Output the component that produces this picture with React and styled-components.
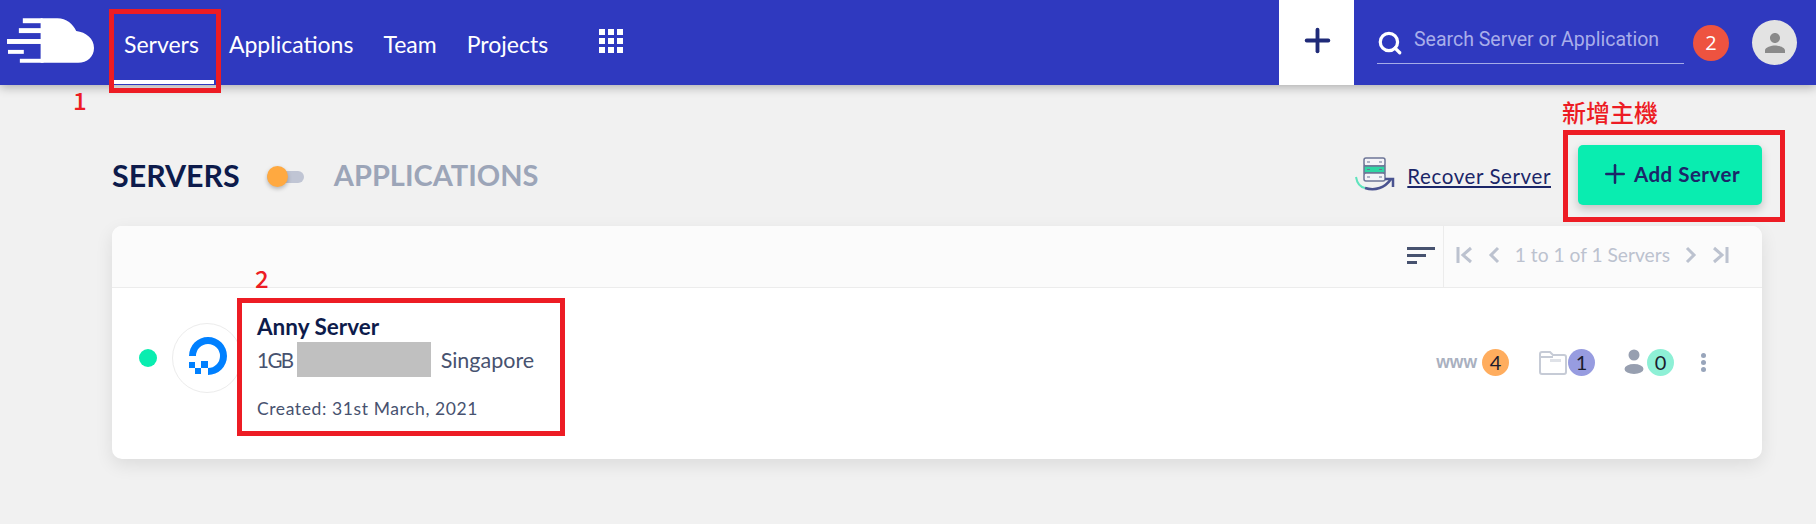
import React from 'react';
import styled, { createGlobalStyle } from 'styled-components';
import { Search, Plus } from 'lucide-react';

const GlobalStyle = createGlobalStyle`
  html, body {
    margin: 0;
    padding: 0;
    background: #f1f1f1;
    font-family: "Lato", "Liberation Sans", sans-serif;
  }
`;

const Page = styled.div`
  position: relative;
  width: 1816px;
  height: 524px;
  overflow: hidden;
`;

const Navbar = styled.header`
  display: flex;
  align-items: center;
  height: 85px;
  background: #2f39bf;
  box-shadow: 0 2px 10px rgba(0, 0, 0, 0.3);
`;

const LogoWrap = styled.div`
  display: flex;
  width: 124px;
  margin-top: -4px;
  padding-left: 7px;
  box-sizing: border-box;
`;

const NavLinks = styled.nav`
  display: flex;
  align-self: stretch;
  gap: 30px;
`;

const NavLink = styled.a`
  display: flex;
  align-items: center;
  height: 85px;
  padding-top: 2px;
  box-sizing: border-box;
  color: #fff;
  font-size: 23px;
  position: relative;

  ${(p) => p.$active && `
    &::after {
      content: "";
      position: absolute;
      left: -11px;
      right: -15px;
      bottom: 1px;
      height: 4px;
      background: #fff;
    }
  `}
`;

const AppsGrid = styled.div`
  display: grid;
  grid-template-columns: repeat(3, 6px);
  grid-auto-rows: 6px;
  gap: 3px;
  margin-left: 51px;
  margin-top: -4px;

  span {
    background: #fff;
  }
`;

const Spacer = styled.div`
  flex: 1;
`;

const PlusBox = styled.div`
  display: flex;
  align-items: center;
  justify-content: center;
  width: 75px;
  height: 85px;
  padding-left: 1px;
  padding-bottom: 4px;
  box-sizing: border-box;
  background: #fff;
  color: #1f2a78;
`;

const SearchBox = styled.div`
  display: flex;
  align-items: center;
  gap: 11px;
  align-self: flex-start;
  width: 307px;
  height: 64px;
  margin-left: 23px;
  padding-top: 15px;
  box-sizing: border-box;
  border-bottom: 1px solid #a5abe8;
  color: #fff;

  svg {
    margin-top: 8px;
  }
`;

const SearchText = styled.span`
  font-family: Roboto, sans-serif;
  font-size: 19.5px;
  color: #a9aeea;
`;

const NotifBadge = styled.div`
  display: flex;
  align-items: center;
  justify-content: center;
  width: 36px;
  height: 36px;
  margin-left: 9px;
  border-radius: 50%;
  background: #ee5340;
  color: #fff;
  font-family: "Open Sans", sans-serif;
  font-size: 20px;
`;

const Avatar = styled.div`
  display: flex;
  align-items: center;
  justify-content: center;
  width: 45px;
  height: 45px;
  margin: 0 19px 0 23px;
  border-radius: 50%;
  background: #e3e3e3;
`;

const Main = styled.main`
  padding: 0 54px 0 112px;
`;

const TitleRow = styled.div`
  display: flex;
  align-items: center;
  height: 141px;
  padding-top: 38px;
  box-sizing: border-box;
`;

const Heading = styled.h2`
  margin: 0;
  font-size: ${(p) => (p.$muted ? 29 : 30.4)}px;
  font-weight: 700;
  color: ${(p) => (p.$muted ? '#9ca5b8' : '#0d1b4b')};
`;

const Toggle = styled.div`
  position: relative;
  width: 37px;
  height: 12px;
  margin: 4px 30px 0 27px;
  border-radius: 6px;
  background: #c0c5d4;
`;

const Knob = styled.div`
  position: absolute;
  left: 0;
  top: -5px;
  width: 21px;
  height: 21px;
  border-radius: 50%;
  background: #ffa940;
  box-shadow: 0 2px 4px rgba(0, 0, 0, 0.25);
`;

const RecoverLink = styled.a`
  margin: 3px 27px 0 12px;
  color: #1b2668;
  font-size: 20.5px;
  letter-spacing: 0.6px;
  text-decoration: underline;
`;

const AddButton = styled.button`
  display: flex;
  align-items: center;
  justify-content: center;
  gap: 4px;
  width: 184px;
  height: 60px;
  padding: 0 0 2px;
  border: 0;
  border-radius: 5px;
  background: #09edb0;
  color: #1b2668;
  font-family: inherit;
  font-size: 20.5px;
  font-weight: 700;
  letter-spacing: 0.5px;
  box-shadow: 0 4px 10px rgba(0, 0, 0, 0.2);
`;

const Card = styled.section`
  border-radius: 10px;
  background: #fff;
  box-shadow: 0 6px 18px rgba(0, 0, 0, 0.09);
`;

const CardHeader = styled.div`
  display: flex;
  align-items: center;
  justify-content: flex-end;
  height: 61px;
  padding-right: 33px;
  border-radius: 10px 10px 0 0;
  border-bottom: 1px solid #ececec;
  background: #fbfbfb;
`;

const SortIcon = styled.svg`
  width: 28px;
  height: 18px;
  margin: 0 8px 2px 0;
`;

const Pager = styled.div`
  display: flex;
  align-items: center;
  gap: 15px;
  height: 100%;
  padding: 0 0 4px 12px;
  box-sizing: border-box;
  border-left: 1px solid #ececec;
  color: #bcc2cf;
  font-size: 19.2px;
`;

const PagerIcon = styled.svg`
  width: ${(p) => p.$w}px;
  height: 18px;
`;

const ServerRow = styled.div`
  display: flex;
  align-items: flex-start;
  height: 171px;
  padding: 35px 56px 0 27px;
  box-sizing: border-box;
`;

const StatusDot = styled.div`
  width: 18px;
  height: 18px;
  margin: 26px 15px 0 0;
  border-radius: 50%;
  background: #09edb0;
`;

const ProviderLogo = styled.div`
  display: flex;
  align-items: center;
  justify-content: center;
  width: 68px;
  height: 68px;
  border: 1px solid #ececec;
  border-radius: 50%;
`;

const ServerInfo = styled.div`
  flex: 1;
  margin-left: 15px;
`;

const ServerName = styled.div`
  margin-top: -9px;
  color: #0d1b4b;
  font-size: 22.5px;
  font-weight: 700;
  line-height: 26px;
`;

const ServerMeta = styled.div`
  display: flex;
  align-items: center;
  margin-top: 2px;
  color: #47526f;
  font-size: 21.5px;
`;

const MemorySize = styled.span`
  font-size: 20.5px;
  letter-spacing: -1.5px;
`;

const Redacted = styled.span`
  width: 134px;
  height: 35px;
  margin: 0 10px 0 4px;
  background: #c0c0c0;
`;

const Created = styled.div`
  margin-top: 21px;
  color: #47526f;
  font-size: 17.5px;
  letter-spacing: 0.6px;
`;

const Stats = styled.div`
  display: flex;
  align-items: center;
  height: 28px;
  margin-top: 25px;
`;

const StatGroup = styled.div`
  display: flex;
  align-items: center;
  gap: ${(p) => p.$gap || 2}px;
  margin-right: ${(p) => p.$mr || 30}px;
`;

const WwwLabel = styled.span`
  color: #a9b0bf;
  font-family: "Liberation Sans", sans-serif;
  font-size: 17.5px;
  font-weight: 700;
`;

const CountBadge = styled.span`
  display: flex;
  align-items: center;
  justify-content: center;
  width: 27px;
  height: 27px;
  border-radius: 50%;
  background: ${(p) => p.$bg};
  color: #1c1c2e;
  font-size: 20px;
`;

const Kebab = styled.div`
  display: flex;
  flex-direction: column;
  gap: 2px;
  margin-left: 1px;

  span {
    width: 5px;
    height: 5px;
    border-radius: 50%;
    background: #98a5bb;
  }
`;

// the red markup someone drew on top of the screenshot
const Mark = styled.div`
  position: absolute;
  left: ${(p) => p.$x}px;
  top: ${(p) => p.$y}px;
  width: ${(p) => p.$w}px;
  height: ${(p) => p.$h}px;
  box-sizing: border-box;
  border: 5px solid #ed1c24;
`;

const MarkText = styled.div`
  position: absolute;
  left: ${(p) => p.$x}px;
  top: ${(p) => p.$y}px;
  color: #ed1c24;
  font-family: "Noto Sans CJK TC", "Noto Sans", sans-serif;
  font-size: ${(p) => p.$size}px;
  font-weight: 500;
  line-height: 1;
`;

const CloudLogo = () => (
  <svg width="87" height="46" viewBox="0 0 88 46" fill="#fff">
    <path d="M34 0h17c9 0 16 6 19 13 10 1 18 8 18 17 0 9-7 15-16 15H34z" />
    <rect x="16" y="0" width="20" height="5" />
    <rect x="12" y="10" width="24" height="5" />
    <rect x="0" y="21" width="36" height="5" />
    <rect x="1" y="32" width="16" height="4" />
    <rect x="13" y="41" width="24" height="4" />
  </svg>
);

const OceanLogo = () => (
  <svg width="46" height="46" viewBox="0 0 46 46" fill="#0080ff">
    <path d="M24 40v-7a12 12 0 1 0-12-12H5a19 19 0 1 1 19 19z" />
    <rect x="17" y="26" width="7" height="7" />
    <rect x="11" y="33" width="6" height="6" />
    <rect x="5" y="27" width="6" height="6" />
  </svg>
);

const RecoverIcon = () => (
  <svg width="40" height="35" viewBox="0 0 40 35">
    <rect x="9" y="1" width="21" height="8" rx="2" fill="#f4f4f8" stroke="#6d7596" strokeWidth="1.5" />
    <rect x="9" y="9" width="21" height="7" fill="#2fd6a4" stroke="#6d7596" strokeWidth="1.5" />
    <rect x="9" y="16" width="21" height="8" rx="2" fill="#f4f4f8" stroke="#6d7596" strokeWidth="1.5" />
    <path d="M12 5h3M12 12.5h3M12 20h3M24 5h3M24 12.5h3M24 20h3" stroke="#6d7596" strokeWidth="1" />
    <path d="M1 20c1 6 4 10 9 11" fill="none" stroke="#5fe3bd" strokeWidth="2" />
    <path d="M10 31c10 3 20 0 26-9" fill="none" stroke="#4a5390" strokeWidth="2.5" />
    <path d="M30 22h8v8" fill="none" stroke="#4a5390" strokeWidth="2.5" />
  </svg>
);

const FolderIcon = () => (
  <svg width="28" height="26" viewBox="0 0 28 26" fill="none" stroke="#c6cbd6" strokeWidth="2">
    <path d="M1 5a2 2 0 0 1 2-2h8l3 3h11a2 2 0 0 1 2 2v15a2 2 0 0 1-2 2H3a2 2 0 0 1-2-2z" />
    <path d="M1 8h13" />
    <path d="M11 10h11v3H11z" fill="#dfe2e8" stroke="none" />
  </svg>
);

const PersonIcon = () => (
  <svg width="20" height="26" viewBox="0 0 20 26" fill="#979fb0">
    <circle cx="10" cy="6" r="5.5" />
    <ellipse cx="10" cy="20" rx="9.5" ry="5" />
  </svg>
);

const AvatarIcon = () => (
  <svg width="30" height="30" viewBox="0 0 24 24" fill="#8a8a8a">
    <path d="M12 12c2.21 0 4-1.79 4-4s-1.79-4-4-4-4 1.79-4 4 1.79 4 4 4zm0 2c-2.67 0-8 1.34-8 4v2h16v-2c0-2.66-5.33-4-8-4z" />
  </svg>
);

const App = () => (
  <Page>
    <GlobalStyle />
    <Navbar>
      <LogoWrap>
        <CloudLogo />
      </LogoWrap>
      <NavLinks>
        <NavLink $active>Servers</NavLink>
        <NavLink>Applications</NavLink>
        <NavLink>Team</NavLink>
        <NavLink>Projects</NavLink>
      </NavLinks>
      <AppsGrid>
        {Array.from({ length: 9 }).map((_, i) => <span key={i} />)}
      </AppsGrid>
      <Spacer />
      <PlusBox>
        <Plus size={37} strokeWidth={2.5} />
      </PlusBox>
      <SearchBox>
        <Search size={26} strokeWidth={3} />
        <SearchText>Search Server or Application</SearchText>
      </SearchBox>
      <NotifBadge>2</NotifBadge>
      <Avatar>
        <AvatarIcon />
      </Avatar>
    </Navbar>

    <Main>
      <TitleRow>
        <Heading>SERVERS</Heading>
        <Toggle><Knob /></Toggle>
        <Heading $muted>APPLICATIONS</Heading>
        <Spacer />
        <RecoverIcon />
        <RecoverLink>Recover Server</RecoverLink>
        <AddButton>
          <Plus size={30} strokeWidth={2} />
          Add Server
        </AddButton>
      </TitleRow>

      <Card>
        <CardHeader>
          <SortIcon viewBox="0 0 28 18" fill="#47526f">
            <rect width="28" height="3" />
            <rect y="7" width="19" height="3" />
            <rect y="14" width="10" height="3" />
          </SortIcon>
          <Pager>
            <PagerIcon $w={17} viewBox="0 0 17 18" fill="none" stroke="#bcc2cf" strokeWidth="3">
              <path d="M2 1v16M15 2L7 9l8 7" />
            </PagerIcon>
            <PagerIcon $w={12} viewBox="0 0 12 18" fill="none" stroke="#bcc2cf" strokeWidth="3">
              <path d="M10 2L3 9l7 7" />
            </PagerIcon>
            <span>1 to 1 of 1 Servers</span>
            <PagerIcon $w={12} viewBox="0 0 12 18" fill="none" stroke="#bcc2cf" strokeWidth="3">
              <path d="M2 2l7 7-7 7" />
            </PagerIcon>
            <PagerIcon $w={17} viewBox="0 0 17 18" fill="none" stroke="#bcc2cf" strokeWidth="3">
              <path d="M15 1v16M2 2l8 7-8 7" />
            </PagerIcon>
          </Pager>
        </CardHeader>
        <ServerRow>
          <StatusDot />
          <ProviderLogo>
            <OceanLogo />
          </ProviderLogo>
          <ServerInfo>
            <ServerName>Anny Server</ServerName>
            <ServerMeta>
              <MemorySize>1GB</MemorySize>
              <Redacted />
              Singapore
            </ServerMeta>
            <Created>Created: 31st March, 2021</Created>
          </ServerInfo>
          <Stats>
            <StatGroup $gap={5} $mr={30}>
              <WwwLabel>www</WwwLabel>
              <CountBadge $bg="#ffad5e">4</CountBadge>
            </StatGroup>
            <StatGroup $gap={1} $mr={29}>
              <FolderIcon />
              <CountBadge $bg="#979ce0">1</CountBadge>
            </StatGroup>
            <StatGroup $gap={3} $mr={26}>
              <PersonIcon />
              <CountBadge $bg="#8ef0d6">0</CountBadge>
            </StatGroup>
            <Kebab><span /><span /><span /></Kebab>
          </Stats>
        </ServerRow>
      </Card>
    </Main>

    <Mark $x={109} $y={9} $w={112} $h={84} />
    <Mark $x={1563} $y={130} $w={222} $h={92} />
    <Mark $x={237} $y={298} $w={328} $h={138} />
    <MarkText $x={73} $y={88} $size={24}>1</MarkText>
    <MarkText $x={255} $y={266} $size={24}>2</MarkText>
    <MarkText $x={1562} $y={100} $size={24}>新增主機</MarkText>
  </Page>
);

export default App;
